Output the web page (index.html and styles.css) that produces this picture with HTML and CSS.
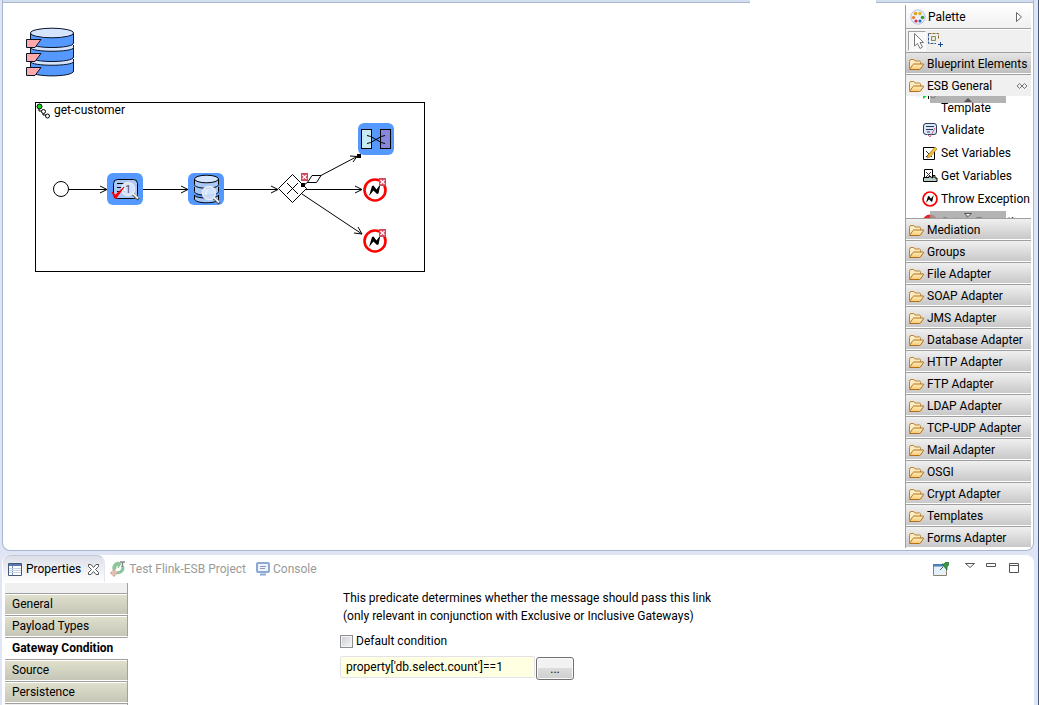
FILE: index.html
```html
<!DOCTYPE html>
<html lang="en">
<head>
    <meta charset="UTF-8">
    <meta name="viewport" content="width=device-width, initial-scale=1.0">
    <title>get-customer</title>
    <link rel="stylesheet" href="styles.css">
</head>
<body>
    <!-- shared icons -->
    <svg class="defs" aria-hidden="true">
        <defs>
            <linearGradient id="folderFill" x1="0" y1="0" x2="0" y2="1">
                <stop offset="0" stop-color="#fff0c0"/>
                <stop offset="1" stop-color="#f8c870"/>
            </linearGradient>
        </defs>
        <symbol id="folder" viewBox="0 0 16 16">
            <path d="M.5 12.500V5.500Q.5 3.500 2 3.500H4.500Q5.500 3.500 6 5H10.500Q11.500 5 11.500 6.500V8" fill="#fdecc0" stroke="#b98238"/>
            <path d="M.5 13.500L4 8.500Q4.300 8 5 8H14Q15 8 14.500 8.800L11.500 13Q11.200 13.500 10.500 13.500Z" fill="url(#folderFill)" stroke="#b07020"/>
        </symbol>
        <symbol id="exception" viewBox="0 0 24 24">
            <circle cx="12" cy="12" r="10.500" fill="#fff" stroke="#f00" stroke-width="2.600"/>
            <path d="M6 18L9 8L10.500 7.500L13.500 11.500L17.500 6L15.500 15.500L14 16L10.500 12.500Z"/>
        </symbol>
        <symbol id="badge" viewBox="0 0 7 8">
            <path d="M0 0H7V8H0Z" fill="#d04a5c"/>
            <path d="M1.500 2L5.500 6M5.500 2L1.500 6" stroke="#fff" stroke-width="1.300"/>
        </symbol>
        <symbol id="lens" viewBox="0 0 20 20">
            <path d="M12.500 12.500L18.500 18.500" stroke="#444" stroke-width="3"/>
            <path d="M12.500 12L18 17.500" stroke="#eee" stroke-width="2"/>
            <circle cx="8" cy="8" r="6.500" fill="#d4e6ff" fill-opacity=".9" stroke="#e6eaf2" stroke-width="1.600"/>
            <path d="M5 10Q3.500 6.500 7 4.500" fill="none" stroke="#fff"/>
        </symbol>
    </svg>

    <main class="editor">
        <div class="editor-tab"></div>
        <div class="canvas">
            <svg class="database" viewBox="0 0 50 50" role="img" aria-label="Database">
                <g stroke="#0a1428" fill="#5599ff">
                    <path d="M5.500 34.500V44C5.500 50.500 48.500 50.500 48.500 44V34.500"/>
                    <path d="M5.500 32V34.500C5.500 39.500 48.500 39.500 48.500 34.500V32" fill="#d5e5ff"/>
                    <path d="M5.500 20.500V30C5.500 36 48.500 36 48.500 30V20.500"/>
                    <path d="M5.500 18V20.500C5.500 25.500 48.500 25.500 48.500 20.500V18" fill="#d5e5ff"/>
                    <path d="M5.500 6V16C5.500 22 48.500 22 48.500 16V6"/>
                    <ellipse cx="27" cy="6" rx="21.500" ry="4.800" fill="#d5e5ff"/>
                    <path d="M1.500 12.500H16L10 20.500H1.500ZM1.500 26.500H16L10 34.500H1.500ZM1.500 40.500H16L10 48.500H1.500Z" fill="#ffaaaa"/>
                </g>
            </svg>
            <section class="process">
                <h1 class="process-title">
                    <svg width="16" height="16" viewBox="0 0 16 16" aria-hidden="true">
                        <path d="M3 4V8H7V12H11" fill="none" stroke="#000"/>
                        <circle cx="3.500" cy="3.500" r="2.500" fill="#0d1" stroke="#000"/>
                        <circle cx="7.500" cy="8.500" r="2" fill="#fff" stroke="#000"/>
                        <circle cx="11.500" cy="13" r="2" fill="#fff" stroke="#000"/>
                    </svg>
                    get-customer
                </h1>
                <svg class="flow" viewBox="36 103 388 168" aria-hidden="true">
                    <!-- links -->
                    <g fill="none" stroke="#000">
                        <path d="M69 189.500H107M100 186L107 189.500L100 193"/>
                        <path d="M143 189.500H188M181 186L188 189.500L181 193"/>
                        <path d="M224 189.500H278M271 186L278 189.500L271 193"/>
                        <path d="M306 189.500H362M355 186L362 189.500L355 193"/>
                        <path d="M302 194L362 234M354 233L362 234L358 227"/>
                        <path d="M304 185L308 182M320 176L357 156.500M350 156L357 156.500L353 162"/>
                        <path d="M307.500 182.500L312 175.500H321L316.500 182.500Z" fill="#fff"/>
                    </g>
                    <circle cx="61" cy="189" r="7.500" fill="#fff" stroke="#000"/>
                    <!-- validate -->
                    <rect x="107" y="173" width="36" height="32" rx="6" fill="#5599ff"/>
                    <rect x="113.500" y="179.500" width="24" height="19" rx="4" fill="#a8c8f8" stroke="#000"/>
                    <path d="M117 183.500H126M117 187.500H125M117 191.500H125" stroke="#000"/>
                    <use href="#lens" x="120" y="181" width="20" height="20"/>
                    <text class="lens-number" x="125" y="193">1</text>
                    <path d="M112 192L115.500 199L124 187L115.500 195Z" fill="#f00" stroke="#f00"/>
                    <!-- database select -->
                    <rect x="188" y="173" width="36" height="32" rx="6" fill="#5599ff"/>
                    <g fill="#a8c8f8" stroke="#000">
                        <path d="M194.500 195V199C194.500 204 218.500 204 218.500 199V195C218.500 199 194.500 199 194.500 195Z"/>
                        <path d="M194.500 187V191.500C194.500 196.500 218.500 196.500 218.500 191.500V187"/>
                        <path d="M194.500 179V184.500C194.500 189.500 218.500 189.500 218.500 184.500V179"/>
                        <ellipse cx="206.500" cy="179" rx="12" ry="3.800" fill="#d5e5ff"/>
                    </g>
                    <use href="#lens" x="201" y="185" width="20" height="20"/>
                    <!-- exclusive gateway -->
                    <path d="M292.500 174.500L306.500 188.500L292.500 202.500L278.500 188.500Z" fill="#fff" stroke="#000"/>
                    <path d="M287 183L298 194M298 183L287 194" stroke="#000"/>
                    <!-- mapping -->
                    <rect x="358" y="123" width="36" height="32" rx="6" fill="#5599ff"/>
                    <rect x="361.500" y="129.500" width="10" height="19" fill="#c8ebf3" stroke="#000"/>
                    <rect x="380.500" y="129.500" width="10" height="19" fill="#8787de" stroke="#000"/>
                    <path d="M367 135.500Q370 135.500 376 139.500T385 143.500M367 143.500Q370 143.500 376 139.500T385 135.500" fill="none" stroke="#000"/>
                    <use href="#exception" x="363" y="178" width="24" height="24"/>
                    <use href="#exception" x="363" y="229" width="24" height="24"/>
                    <use href="#badge" x="301" y="173" width="7" height="8"/>
                    <use href="#badge" x="379" y="178" width="7" height="8"/>
                    <use href="#badge" x="379" y="229" width="7" height="8"/>
                    <path d="M301 183H305V187H301ZM357 154H361V158H357Z"/>
                </svg>
            </section>
        </div>

        <aside class="palette">
            <header class="palette-header">
                <svg width="16" height="16" viewBox="0 0 16 16" aria-hidden="true">
                    <circle cx="8" cy="8" r="7.200" fill="#eaf0fa" stroke="#b4c2dc"/>
                    <circle cx="5.500" cy="4.500" r="1.800" fill="#e8a018"/>
                    <circle cx="10" cy="4.500" r="1.800" fill="#d8b820"/>
                    <circle cx="3.500" cy="8.500" r="1.600" fill="#f07818"/>
                    <circle cx="12.500" cy="8.500" r="1.800" fill="#38a030"/>
                    <circle cx="6" cy="12" r="1.600" fill="#d02858"/>
                    <circle cx="10" cy="12" r="1.600" fill="#2868c8"/>
                </svg>
                <span>Palette</span>
                <svg class="collapse" width="8" height="12" viewBox="0 0 8 12" aria-hidden="true">
                    <path d="M1.500 1.500L6.500 6L1.500 10.500Z" fill="#fff" stroke="#666"/>
                </svg>
            </header>
            <div class="palette-tools">
                <button class="tool active" aria-label="Select">
                    <svg width="16" height="18" viewBox="0 0 16 18">
                        <path d="M5.500 1.500V14L8.500 11.500L11 16.500L13.500 15L11 10.500H14.500Z" fill="#fff" stroke="#777"/>
                    </svg>
                </button>
                <button class="tool" aria-label="Marquee">
                    <svg width="16" height="16" viewBox="0 0 16 16">
                        <path d="M.5 1.500H10.500V7" fill="none" stroke="#8a6a2a" stroke-dasharray="3 1"/>
                        <path d="M.5 1.500V11.500H8" fill="none" stroke="#3a5a8a" stroke-dasharray="3 1"/>
                        <path d="M3.500 4.500H7.500V8.500H3.500Z" fill="#e8e8d0" stroke="#8a8a6a"/>
                        <path d="M10 12.500H15M12.500 10V15" stroke="#1a4a8a"/>
                    </svg>
                </button>
            </div>
            <button class="drawer pressed"><svg><use href="#folder"/></svg>Blueprint Elements</button>
            <button class="drawer open">
                <svg><use href="#folder"/></svg>ESB General
                <svg class="pin" viewBox="0 0 12 8"><path d="M1 4L3.500 1.500L6 4L3.500 6.500ZM6 4L8.500 1.500L11 4L8.500 6.500ZM3.500 1.500L8.500 6.500" fill="none" stroke="#777"/></svg>
            </button>
            <div class="drawer-items">
                <ul>
                    <li class="tall">
                        <svg viewBox="0 0 16 16"><path d="M1 8L6 12L1 16Z" fill="#0d1"/><path d="M6.500 8V16" stroke="#000"/><circle cx="11" cy="12.500" r="2.500" fill="#fff" stroke="#000"/></svg>
                        <span>Route from<br>Template</span>
                    </li>
                    <li>
                        <svg viewBox="0 0 16 16"><rect x="1.500" y="1.500" width="13" height="11" rx="2.500" fill="#dbe8fa" stroke="#2a3a58"/><path d="M4 4.500H12M4 7.500H11M5 10H8" stroke="#2a3a58"/><path d="M5 12L8 15L13 6" fill="none" stroke="#d86070"/></svg>
                        Validate
                    </li>
                    <li>
                        <svg viewBox="0 0 16 16"><path d="M1.500 2.500H12.500V14.500H1.500Z" fill="#fff" stroke="#000"/><path d="M4 6L10 12M10 6L4 12" stroke="#333"/><path d="M6 10L13 2L15 4L8 12L5 13Z" fill="#f0c040" stroke="#a87818" stroke-width=".7"/></svg>
                        Set Variables
                    </li>
                    <li>
                        <svg viewBox="0 0 16 16"><path d="M2.500 1.500H10.500V11.500H2.500Z" fill="#fff" stroke="#000"/><path d="M4 4L9 9M9 4L4 9" stroke="#333"/><path d="M1.500 9.500H7V8L11 10V7.500H13V10H15V13.500H1.500Z" fill="#b8ccc4" stroke="#000"/></svg>
                        Get Variables
                    </li>
                    <li><svg><use href="#exception"/></svg>Throw Exception</li>
                    <li><svg viewBox="0 0 16 16"><circle cx="8" cy="8" r="7.500" fill="#e22"/></svg>Catch Exception</li>
                </ul>
                <button class="scroll up" aria-label="Scroll up"><svg viewBox="0 0 8 4"><path d="M0 4L4 0L8 4Z" fill="#555"/></svg></button>
                <button class="scroll down" aria-label="Scroll down"><svg viewBox="0 0 8 4"><path d="M.5 .5H7.500L4 3.500Z" fill="#fff" stroke="#555"/></svg></button>
            </div>
            <button class="drawer"><svg><use href="#folder"/></svg>Mediation</button>
            <button class="drawer"><svg><use href="#folder"/></svg>Groups</button>
            <button class="drawer"><svg><use href="#folder"/></svg>File Adapter</button>
            <button class="drawer"><svg><use href="#folder"/></svg>SOAP Adapter</button>
            <button class="drawer"><svg><use href="#folder"/></svg>JMS Adapter</button>
            <button class="drawer"><svg><use href="#folder"/></svg>Database Adapter</button>
            <button class="drawer"><svg><use href="#folder"/></svg>HTTP Adapter</button>
            <button class="drawer"><svg><use href="#folder"/></svg>FTP Adapter</button>
            <button class="drawer"><svg><use href="#folder"/></svg>LDAP Adapter</button>
            <button class="drawer"><svg><use href="#folder"/></svg>TCP-UDP Adapter</button>
            <button class="drawer"><svg><use href="#folder"/></svg>Mail Adapter</button>
            <button class="drawer"><svg><use href="#folder"/></svg>OSGI</button>
            <button class="drawer"><svg><use href="#folder"/></svg>Crypt Adapter</button>
            <button class="drawer"><svg><use href="#folder"/></svg>Templates</button>
            <button class="drawer"><svg><use href="#folder"/></svg>Forms Adapter</button>
        </aside>
    </main>

    <section class="views">
        <div class="view-bar">
            <button class="view-tab current">
                <svg width="14" height="13" viewBox="0 0 14 13"><path d="M.5 .5H13.500V12.500H.5Z" fill="#fff" stroke="#44587c"/><path d="M1 1H13V3H1Z" fill="#5a78b0"/><path d="M4.500 3V12" stroke="#7a8cac"/><path d="M1 5.500H13M1 7.500H13M1 9.500H13" stroke="#c8d2e4"/></svg>
                Properties
                <svg class="close" width="11" height="11" viewBox="0 0 11 11"><path d="M.5 .5H3L5.500 3.500L8 .5H10.500V2.500L7.500 5.500L10.500 8.500V10.500H8L5.500 7.500L3 10.500H.5V8.500L3.500 5.500L.5 2.500Z" fill="#fff" stroke="#555"/></svg>
            </button>
            <button class="view-tab">
                <svg width="16" height="16" viewBox="0 0 16 16"><path d="M9 1A6 6 0 0 0 3 9L6 8A3.500 3.500 0 0 1 8 4V7L11 3Z" fill="#8cc89c" stroke="#7ab08a" stroke-width=".5"/><path d="M14 5A6 6 0 0 1 7 13V10A3.500 3.500 0 0 0 11 5Z" fill="#8cc89c"/><path d="M10 1H15M12.500 1V6" stroke="#888" stroke-width="1.500"/><circle cx="4" cy="12" r="2.500" fill="none" stroke="#d0a090"/><path d="M4 8V16M0 12H8" stroke="#d0a090"/></svg>
                Test Flink-ESB Project
            </button>
            <button class="view-tab">
                <svg width="14" height="14" viewBox="0 0 14 14"><rect x="1" y="1" width="12" height="9" rx="1" fill="#eef4fc" stroke="#8ca8d4" stroke-width="2"/><path d="M4 4.500H10M4 6.500H9" stroke="#8a9ab4"/><path d="M4 12.500H10" stroke="#8ca8d4" stroke-width="2"/></svg>
                Console
            </button>
            <div class="view-actions">
                <button aria-label="Pin"><svg width="17" height="16" viewBox="0 0 17 16"><path d="M.5 2.500H13.500V13.500H.5Z" fill="#e4f0fa" stroke="#8a8468"/><path d="M0 2H14V4.500H0Z" fill="#4a80b8"/><path d="M7 8L10 5" stroke="#555"/><path d="M9 2L11 2L13 0H15.500V3L14 5V8Z" fill="#3c9444" stroke="#1e6a2c" stroke-width=".7"/></svg></button>
                <button class="menu" aria-label="View menu"><svg width="10" height="12" viewBox="0 0 10 12"><path d="M.5 1.500H9.500L5 5.500Z" fill="#fff" stroke="#555"/></svg></button>
                <button aria-label="Minimize"><svg width="10" height="12" viewBox="0 0 10 12"><path d="M.5 1.500H9.500V4.500H.5Z" fill="#fff" stroke="#555"/></svg></button>
                <button class="maximize" aria-label="Maximize"><svg width="10" height="12" viewBox="0 0 10 12"><path d="M.5 1.500H9.500V10.500H.5ZM.5 3.500H9.500" fill="#fff" stroke="#555"/></svg></button>
            </div>
        </div>
        <div class="properties">
            <nav class="sections">
                <button>General</button>
                <button>Payload Types</button>
                <button class="selected">Gateway Condition</button>
                <button>Source</button>
                <button>Persistence</button>
            </nav>
            <form class="condition">
                <p>This predicate determines whether the message should pass this link<br>
                (only relevant in conjunction with Exclusive or Inclusive Gateways)</p>
                <label class="check"><input type="checkbox"> Default condition</label>
                <div class="expression">
                    <input type="text" aria-label="Condition" value="property['db.select.count']==1">
                    <button type="button">...</button>
                </div>
            </form>
        </div>
    </section>
</body>
</html>
```

FILE: styles.css
```css
* {
    box-sizing: border-box;
}
body {
    margin: 0;
    height: 100vh;
    padding: 0 4px 0 2px;
    display: flex;
    flex-direction: column;
    gap: 4px;
    overflow: hidden;
    background-color: #dfe5f5;
    border-right: 1px solid #46587a;
    font-family: Roboto, "Open Sans", sans-serif;
    font-size: 12px;
    line-height: 18px;
    color: #000;
}
button, input {
    font: inherit;
    color: inherit;
}
button {
    margin: 0;
    padding: 0;
    border: none;
    background: none;
}
svg {
    display: block;
    flex: none;
}
.defs {
    position: absolute;
    width: 0;
    height: 0;
}

/* editor */
.editor {
    position: relative;
    flex: none;
    display: flex;
    padding: 3px 2px 2px 0;
    background-color: #fff;
    border: 1px solid #a9b6d0;
    border-top: none;
    border-radius: 0 0 8px 8px;
    background-image: linear-gradient(#d3deef 2px, #a9b6d0 2px, #a9b6d0 3px, transparent 3px);
}
/* active editor tab, hangs over the top border */
.editor-tab {
    position: absolute;
    top: 0;
    right: 157px;
    width: 126px;
    height: 3px;
    background-color: #fff;
}
.canvas {
    position: relative;
    flex: 1;
}
.database {
    position: absolute;
    left: 22px;
    top: 24px;
    width: 50px;
    height: 50px;
}
.process {
    position: absolute;
    left: 32px;
    top: 99px;
    width: 390px;
    height: 170px;
    border: 1px solid #000;
}
.process-title {
    display: flex;
    gap: 2px;
    margin: 0;
    font-size: 12px;
    font-weight: normal;
    line-height: 15px;
}
.flow {
    position: absolute;
    left: 0;
    top: 0;
    width: 388px;
    height: 168px;
}
.lens-number {
    font-size: 11px;
    fill: #555;
}

/* palette */
.palette {
    width: 126px;
    margin-top: 2px;
    border-left: 1px solid #a0a0a0;
}
.palette-header {
    display: flex;
    align-items: center;
    gap: 2px;
    height: 24px;
    padding: 0 8px 0 4px;
    background: linear-gradient(#fff, #f0f0f0);
    border-bottom: 1px solid #a0a0a0;
}
.collapse {
    margin-left: auto;
}
.palette-tools {
    display: flex;
    height: 23px;
    padding: 1px 2px;
    background-color: #f0f0f0;
    border-top: 1px solid #fff;
}
.tool {
    width: 18px;
    height: 20px;
}
.tool.active {
    border: 1px solid #a0a0a0;
    border-right-color: #fff;
    border-bottom-color: #fff;
    background-color: #f8f8f8;
}
.tool + .tool {
    padding: 0 0 2px 2px;
}
.drawer {
    display: flex;
    align-items: center;
    gap: 2px;
    width: 100%;
    height: 22px;
    padding: 1px 3px 0;
    white-space: nowrap;
    background: linear-gradient(#f0f0f0, #c8c8c8);
    border-top: 1px solid #a0a0a0;
    border-bottom: 1px solid #fff;
}
.drawer svg {
    width: 16px;
    height: 16px;
}
.drawer.pressed {
    background: linear-gradient(#e6e6e6, #bebebe);
}
.drawer.open {
    background: #f0f0f0;
    border-bottom: none;
}
.drawer .pin {
    width: 12px;
    height: 8px;
    margin-left: auto;
}
.drawer-items {
    position: relative;
    display: flex;
    align-items: center;
    height: 122px;
    padding-top: 2px;
    overflow: hidden;
}
.drawer-items ul {
    margin: 0;
    padding: 0 0 0 16px;
    list-style: none;
}
.drawer-items li {
    display: flex;
    align-items: center;
    gap: 3px;
    height: 23px;
    white-space: nowrap;
}
.drawer-items li.tall {
    align-items: flex-start;
    height: 36px;
    line-height: 17px;
}
.drawer-items li svg {
    width: 16px;
    height: 16px;
}
.scroll {
    position: absolute;
    left: 24px;
    right: 25px;
    height: 7px;
    display: flex;
    justify-content: center;
    align-items: center;
    background-color: rgba(160, 160, 160, 0.8);
}
.scroll svg {
    width: 8px;
    height: 4px;
}
.scroll.up {
    top: 0;
}
.scroll.down {
    bottom: 0;
}

/* views */
.views {
    flex: 1;
    min-height: 0;
    padding-left: 1px;
    background-color: #fff;
    border-radius: 8px 8px 0 0;
}
.view-bar {
    display: flex;
    height: 28px;
}
.view-tab {
    display: flex;
    align-items: center;
    gap: 3px;
    height: 27px;
    padding: 0 5px;
    color: #9a9a9a;
    white-space: nowrap;
}
.view-tab.current {
    gap: 4px;
    color: #000;
    background: linear-gradient(#dcdfe8, #fff);
    border-top: 1px solid #c4c9d6;
    border-right: 1px solid #e4e7ef;
    border-radius: 8px 8px 0 0;
}
.close {
    margin-left: 3px;
}
.view-actions {
    display: flex;
    align-items: flex-start;
    margin-left: auto;
    padding: 7px 15px 0 0;
    gap: 11px;
}
.view-actions .menu {
    margin-left: 4px;
}
.view-actions .maximize {
    margin-left: 2px;
}
.properties {
    display: flex;
    padding-left: 2px;
}
.sections {
    width: 123px;
    margin-right: 212px;
    padding-top: 10px;
    background-color: #f0f0f0;
    box-shadow: inset -1px 0 #a0a0a0;
}
.sections button {
    display: block;
    width: 100%;
    height: 22px;
    padding: 0 7px;
    text-align: left;
    white-space: nowrap;
    line-height: 20px;
    background: linear-gradient(#fff 1px, #dfdfcc 1px, #c6c6b8);
    border-top: 1px solid #a0a0a0;
    border-right: 1px solid #a0a0a0;
    border-bottom: 1px solid #fff;
}
.sections .selected {
    font-weight: bold;
    background: #fff;
    border-right-color: #fff;
}
.sections::after {
    content: "";
    display: block;
    height: 2px;
    border-top: 1px solid #a0a0a0;
}
.condition {
    padding-top: 6px;
}
.condition p {
    margin: 0 0 7px 3px;
    white-space: nowrap;
}
.check {
    display: flex;
    align-items: center;
    gap: 3px;
    height: 18px;
}
.check input {
    appearance: none;
    width: 13px;
    height: 13px;
    margin: 0;
    border: 1px solid #8e8f8f;
    background: linear-gradient(135deg, #cbcfd5, #f6f6f6);
    box-shadow: inset 0 0 0 1px #f4f4f4;
}
.expression {
    display: flex;
    gap: 1px;
    margin-top: 6px;
}
.expression input {
    width: 195px;
    height: 22px;
    padding: 0 5px;
    background-color: #ffffe1;
    border: 1px solid #e2e3ea;
    border-radius: 2px;
}
.expression button {
    width: 38px;
    height: 23px;
    margin-top: 1px;
    background: linear-gradient(#f2f2f2 50%, #dcdcdc 50%, #cfcfcf);
    border: 1px solid #707070;
    border-radius: 3px;
    box-shadow: inset 0 0 0 1px #fafafa;
}
```
